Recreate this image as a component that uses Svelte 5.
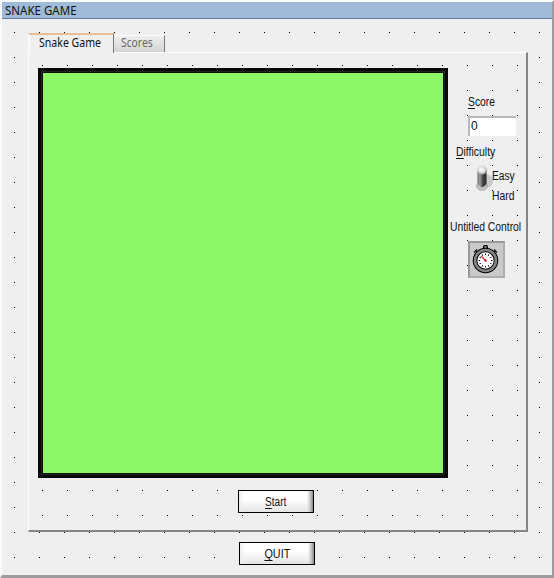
<script>
  let score = $state(0);
  let tab = $state('game');
  const ticks = Array.from({ length: 12 }, (_, i) => i * 30);
</script>

<div class="window">
  <header><span class="title">SNAKE GAME</span></header>
  <main>
    <nav>
      <button class="tab" class:active={tab === 'game'} onclick={() => (tab = 'game')}><span class="tab-one">Snake Game</span></button>
      <button class="tab second" class:active={tab === 'scores'} onclick={() => (tab = 'scores')}><span class="tab-two">Scores</span></button>
    </nav>
    <section class="panel">
      <div class="left">
        <div class="board"></div>
        <button class="push"><span class="start"><u>S</u>tart</span></button>
      </div>
      <aside>
        <div class="label score"><span><u>S</u>core</span></div>
        <div class="field"><span>{score}</span></div>
        <div class="label difficulty"><span><u>D</u>ifficulty</span></div>
        <div class="switch">
          <svg width="19" height="28" viewBox="0 0 19 28">
            <defs>
              <linearGradient id="stem" x1="0" x2="1" y1="0" y2="0">
                <stop offset="0" stop-color="#666" /><stop offset=".25" stop-color="#a0a0a0" />
                <stop offset=".6" stop-color="#444" /><stop offset="1" stop-color="#252525" />
              </linearGradient>
              <radialGradient id="knob" cx=".45" cy=".4" r=".6">
                <stop offset="0" stop-color="#fff" /><stop offset=".6" stop-color="#ddd" /><stop offset="1" stop-color="#888" />
              </radialGradient>
            </defs>
            <ellipse cx="12.500" cy="16" rx="5.500" ry="6.500" fill="#cacaca" />
            <ellipse cx="7" cy="21" rx="5.400" ry="4.300" fill="#c4c4c4" stroke="#888" stroke-width=".6" />
            <path d="M2.500 6V18.500Q7 26 11.500 18.500V6Z" fill="url(#stem)" />
            <ellipse cx="7" cy="5.300" rx="4.800" ry="4.500" fill="url(#knob)" />
          </svg>
          <div class="options"><div class="label easy"><span>Easy</span></div><div class="label hard"><span>Hard</span></div></div>
        </div>
        <div class="label untitled"><span>Untitled Control</span></div>
        <div class="timer">
          <svg width="33" height="33" viewBox="0 0 33 33">
            <rect x="13" y="2" width="5" height="5" rx="1.500" fill="#000" />
            <rect x="14.500" y="3" width="2" height="3" fill="#999" />
            <path d="M4 9.500l3-3M24 6.500l3 3M6 8l2.500 2.500M25 8l-2.500 2.500" stroke="#111" stroke-width="1.300" />
            <circle cx="15.500" cy="17.500" r="10.500" fill="#fff" stroke="#000" stroke-width="4.600" />
            <circle cx="15.500" cy="17.500" r="10.500" fill="none" stroke="#858585" stroke-width="2.600" />
            {#each ticks as a}
              <rect x="15" y="10.700" width="1" height="1.300" fill="#000" transform={`rotate(${a} 15.5 17.5)`} />
            {/each}
            <path d="M11 13L16 18" stroke="#d0303c" stroke-width="1.200" />
            <circle cx="15.500" cy="17.500" r="1.300" fill="#d0202c" />
          </svg>
        </div>
      </aside>
    </section>
    <button class="push quit"><span class="quit-text"><u>Q</u>UIT</span></button>
  </main>
</div>

<style>
  :global(body) { margin: 0; background: #efefef; }
  * { box-sizing: border-box; }
  .window {
    width: 554px; height: 578px; overflow: hidden; background: #efefef;
    border-style: solid; border-width: 2px 2px 3px 2px;
    border-color: #fbfbfb #9c9c9c #9c9c9c #fbfbfb;
    font-family: "Liberation Sans", Arial, sans-serif; font-size: 12px; color: #111;
  }
  header {
    height: 17px; background: #a0bbd8; border-bottom: 1px solid #5f7d9f;
    padding-left: 3px; line-height: 17px; font-family: "Noto Sans", sans-serif; font-size: 12px;
  }
  span { display: inline-block; white-space: nowrap; transform-origin: 0 50%; }
  .title { transform: scaleX(.96); }
  main {
    height: 556px; display: flex; flex-direction: column; padding: 13px 0 0 26px;
    background: conic-gradient(from 270deg at 1px 1px, #000 90deg, transparent 0) 12px 13px / 25px 25px;
  }
  button { font: inherit; color: inherit; padding: 0; margin: 0; }
  nav { display: flex; align-items: flex-end; height: 20px; }
  .tab {
    height: 17px; width: 51px; border: 0; border-right: 1px solid #777; border-top: 1px solid #fff;
    background: linear-gradient(#efefef, #d3d3d3); color: #666; text-align: left;
    font-family: "Noto Sans", sans-serif; font-size: 12px; line-height: 14px; padding: 0 0 2px 7px;
  }
  .tab.active {
    width: 86px; height: 20px; margin-bottom: -1px; padding: 0 0 3px 9px; background: #efefef; color: #111;
    border-top: 2px solid #e9bd94; border-left: 2px solid #fafafa; line-height: 15px; z-index: 1;
  }
  .second.active { width: 51px; padding-left: 5px; }
  .tab-one { transform: scaleX(.88); }
  .tab-two { transform: scaleX(.86); }
  .panel {
    width: 500px; height: 480px; flex: none; display: flex; padding: 15px 0 0 9px;
    border-style: solid; border-width: 1px 2px 2px 1px; border-color: #fff #858585 #858585 #fff;
    background: conic-gradient(from 270deg at 1px 1px, #000 90deg, transparent 0) 13px 12px / 25px 25px #efefef;
  }
  .left { width: 410px; display: flex; flex-direction: column; }
  .board { width: 410px; height: 410px; background: #8df768; border: 5px solid #080808; outline: 1px solid #1c281c; outline-offset: -4px; }
  .push {
    display: flex; align-items: center; justify-content: center; width: 76px; height: 23px; margin: 12px 0 0 200px;
    border: 1px solid #000; border-radius: 0;
    background: linear-gradient(90deg, #eee 0, #fff0 5px, #fff0 68px, #ccc 71px, #888 74px), linear-gradient(#fff 0, #fff 8px, #e4e4e4 21px);
  }
  .push span { transform-origin: 50%; }
  .start { transform: scaleX(.84); }
  .quit { margin: 10px 0 0 211px; flex: none; }
  .quit-text { transform: scaleX(.9); }
  u { text-decoration: none; border-bottom: 1px solid #111; display: inline-block; line-height: 12px; }
  aside { width: 78px; display: flex; flex-direction: column; }
  .label { height: 14px; line-height: 14px; }
  .score { margin: 27px 0 0 20px; }
  .score span { transform: scaleX(.86); }
  .field {
    margin: 7px 0 0 20px; width: 48px; height: 20px; background: #fff; border: solid #b8b8b8;
    border-width: 2px 0 0 2px; padding-left: 1px; line-height: 17px;
  }
  .difficulty { margin: 9px 0 0 8px; }
  .difficulty span { transform: scaleX(.87); }
  .switch { display: flex; height: 40px; padding-left: 27px; margin-top: 6px; }
  .switch svg { flex: none; margin-right: -2px; }
  .options { padding-top: 4px; }
  .hard { margin-top: 6px; }
  .easy span { transform: scaleX(.85); }
  .hard span { transform: scaleX(.86); }
  .untitled { margin: 15px 0 0 2px; }
  .untitled span { transform: scaleX(.86); }
  .timer {
    margin: 7px 0 0 20px; width: 37px; height: 37px; flex: none;
    background: #c9c9c9; border: 2px solid; border-color: #999 #adadad #adadad #999;
  }
  .timer svg { display: block; }
</style>
